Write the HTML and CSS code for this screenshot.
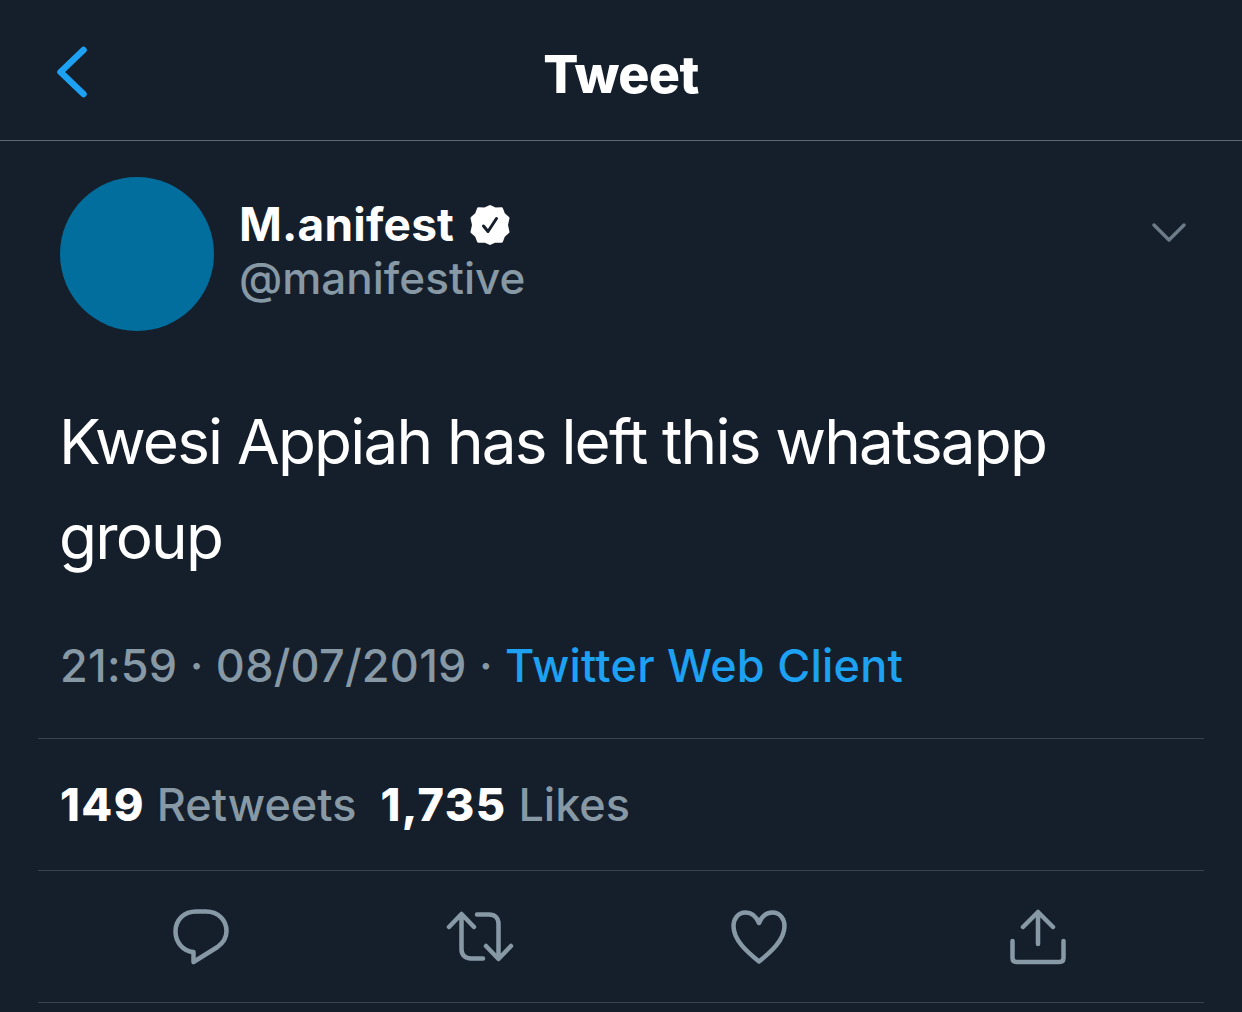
FILE: index.html
```html
<!DOCTYPE html>
<html lang="en">
<head>
    <meta charset="UTF-8">
    <meta name="viewport" content="width=device-width, initial-scale=1.0">
    <title>Tweet</title>
    <link rel="stylesheet" href="styles.css">
</head>
<body>
    <div id="container">
        <!-- Top bar -->
        <div class="top-bar">
            <svg class="back-icon" width="34" height="56" viewBox="0 0 34 56">
                <path d="M28.500 6 L5.500 28 L28.500 50" />
            </svg>
            <div class="top-title">Tweet</div>
        </div>

        <div class="tweet">
            <div class="author">
                <div class="avatar"></div>
                <div class="author-names">
                    <div class="author-name">
                        M.anifest
                        <svg class="verified" width="42" height="42" viewBox="0 0 42 42">
                            <path class="verified-badge" d="M21 2.500 L26.500 5 L32.500 4.800 L34.500 10 L39 14 L37.500 21 L39 28 L34.500 32 L32.500 37.200 L26.500 37 L21 39.500 L15.500 37 L9.500 37.200 L7.500 32 L3 28 L4.500 21 L3 14 L7.500 10 L9.500 4.800 L15.500 5 Z" />
                            <path class="verified-check" d="M14.500 22 L19 27.500 L27.500 14.500" />
                        </svg>
                    </div>
                    <div class="author-handle">@manifestive</div>
                </div>
                <svg class="more-icon" width="36" height="22" viewBox="0 0 36 22">
                    <path d="M3 3 L18 18 L33 3" />
                </svg>
            </div>

            <div class="tweet-text">Kwesi Appiah has left this whatsapp group</div>

            <div class="tweet-meta">21:59 · 08/07/2019 · <span class="tweet-source">Twitter Web Client</span></div>

            <div class="tweet-stats">
                <span class="stat"><b>149</b> Retweets</span>
                <span class="stat"><b>1,735</b> Likes</span>
            </div>

            <!-- Action icons -->
            <div class="tweet-actions">
                <div class="action">
                    <svg width="56" height="56" viewBox="0 0 56 56">
                        <path d="M23 2.500 H33 C45 2.500 53.500 11 53.500 22 C53.500 29 50 34 44.500 38 L20.500 53 L20.500 43 C10 42.500 2.500 33 2.500 22.500 C2.500 11 11 2.500 23 2.500 Z" />
                    </svg>
                </div>
                <div class="action">
                    <svg width="68" height="52" viewBox="0 0 68 52">
                        <path d="M3 16 L15.500 3 L28 16 M15.500 4 V38 C15.500 44 19 47.500 25 47.500 H37 M31 3.500 H43 C49 3.500 52.500 7 52.500 13 V47 M40 35 L52.500 48 L65 35" />
                    </svg>
                </div>
                <div class="action">
                    <svg width="56" height="54" viewBox="0 0 56 54">
                        <path d="M28 13 C25 6 20 2.500 14.500 2.500 C7 2.500 2.500 9 2.500 16 C2.500 30 16 42 28 51.500 C40 42 53.500 30 53.500 16 C53.500 9 49 2.500 41.500 2.500 C36 2.500 31 6 28 13 Z" />
                    </svg>
                </div>
                <div class="action">
                    <svg width="56" height="56" viewBox="0 0 56 56">
                        <path d="M13 18 L28 3 L43 18 M28 3 V35 M2.500 32 V49 C2.500 51.500 4 53 6.500 53 H49.500 C52 53 53.500 51.500 53.500 49 V32" />
                    </svg>
                </div>
            </div>
        </div>
    </div>
</body>
</html>
```

FILE: styles.css
```css
body {
    background: #151f2c;
    color: #fff;
    margin: 0;
    padding: 0;
    font-family: Inter, 'Liberation Sans', sans-serif;
    overflow: hidden;
}

#container {
    width: 1242px;
    height: 1012px;
}

svg path {
    fill: none;
    stroke-linecap: round;
    stroke-linejoin: round;
}

.top-bar {
    height: 140px;
    border-bottom: 1px solid #5d6873;
    display: flex;
    align-items: center;
    justify-content: center;
    position: relative;
}

.back-icon {
    position: absolute;
    left: 55px;
    top: 44px;
}

.back-icon path {
    stroke: #1da1f2;
    stroke-width: 6.500;
}

.top-title {
    font-size: 52px;
    font-weight: 800;
    letter-spacing: -0.600px;
    margin-top: 8px;
}

.tweet {
    padding: 36px 38px 0;
}

.author {
    display: flex;
    padding-left: 22px;
    position: relative;
}

.avatar {
    width: 154px;
    height: 154px;
    border-radius: 50%;
    background: #016e9d;
    flex-shrink: 0;
}

.author-names {
    margin-left: 25px;
    padding-top: 20px;
}

.author-name {
    display: flex;
    align-items: center;
    gap: 15px;
    font-size: 46px;
    font-weight: 700;
    letter-spacing: 0.200px;
    line-height: 55px;
}

.verified-badge {
    fill: #fff;
    stroke: #fff;
    stroke-width: 3;
}

.verified-check {
    stroke: #151f2c;
    stroke-width: 3;
}

.author-handle {
    font-size: 44px;
    font-weight: 500;
    line-height: 53px;
    color: #8899a6;
}

.more-icon {
    position: absolute;
    right: 17px;
    top: 45px;
}

.more-icon path {
    stroke: #6b7b88;
    stroke-width: 3.500;
}

.tweet-text {
    font-size: 62px;
    line-height: 95px;
    letter-spacing: -1.800px;
    padding: 63px 60px 0 21px;
}

.tweet-meta {
    font-size: 45px;
    font-weight: 500;
    letter-spacing: 0.250px;
    line-height: 56px;
    color: #8899a6;
    padding: 54px 0 0 22px;
    height: 100px;
    border-bottom: 1px solid #38444d;
}

.tweet-source {
    color: #1da1f2;
}

.tweet-stats {
    display: flex;
    gap: 24px;
    font-size: 45px;
    font-weight: 500;
    line-height: 56px;
    color: #8899a6;
    padding: 38px 0 0 22px;
    height: 93px;
    border-bottom: 1px solid #38444d;
}

.tweet-stats b {
    color: #fff;
    font-weight: 800;
    letter-spacing: 1.400px;
}

.tweet-actions {
    display: grid;
    grid-template-columns: repeat(4, 279px);
    padding-left: 23px;
    height: 131px;
    border-bottom: 1px solid #38444d;
    align-items: center;
}

.action {
    display: flex;
    justify-content: center;
}

.action path {
    stroke: #8899a6;
    stroke-width: 4.500;
}
```
